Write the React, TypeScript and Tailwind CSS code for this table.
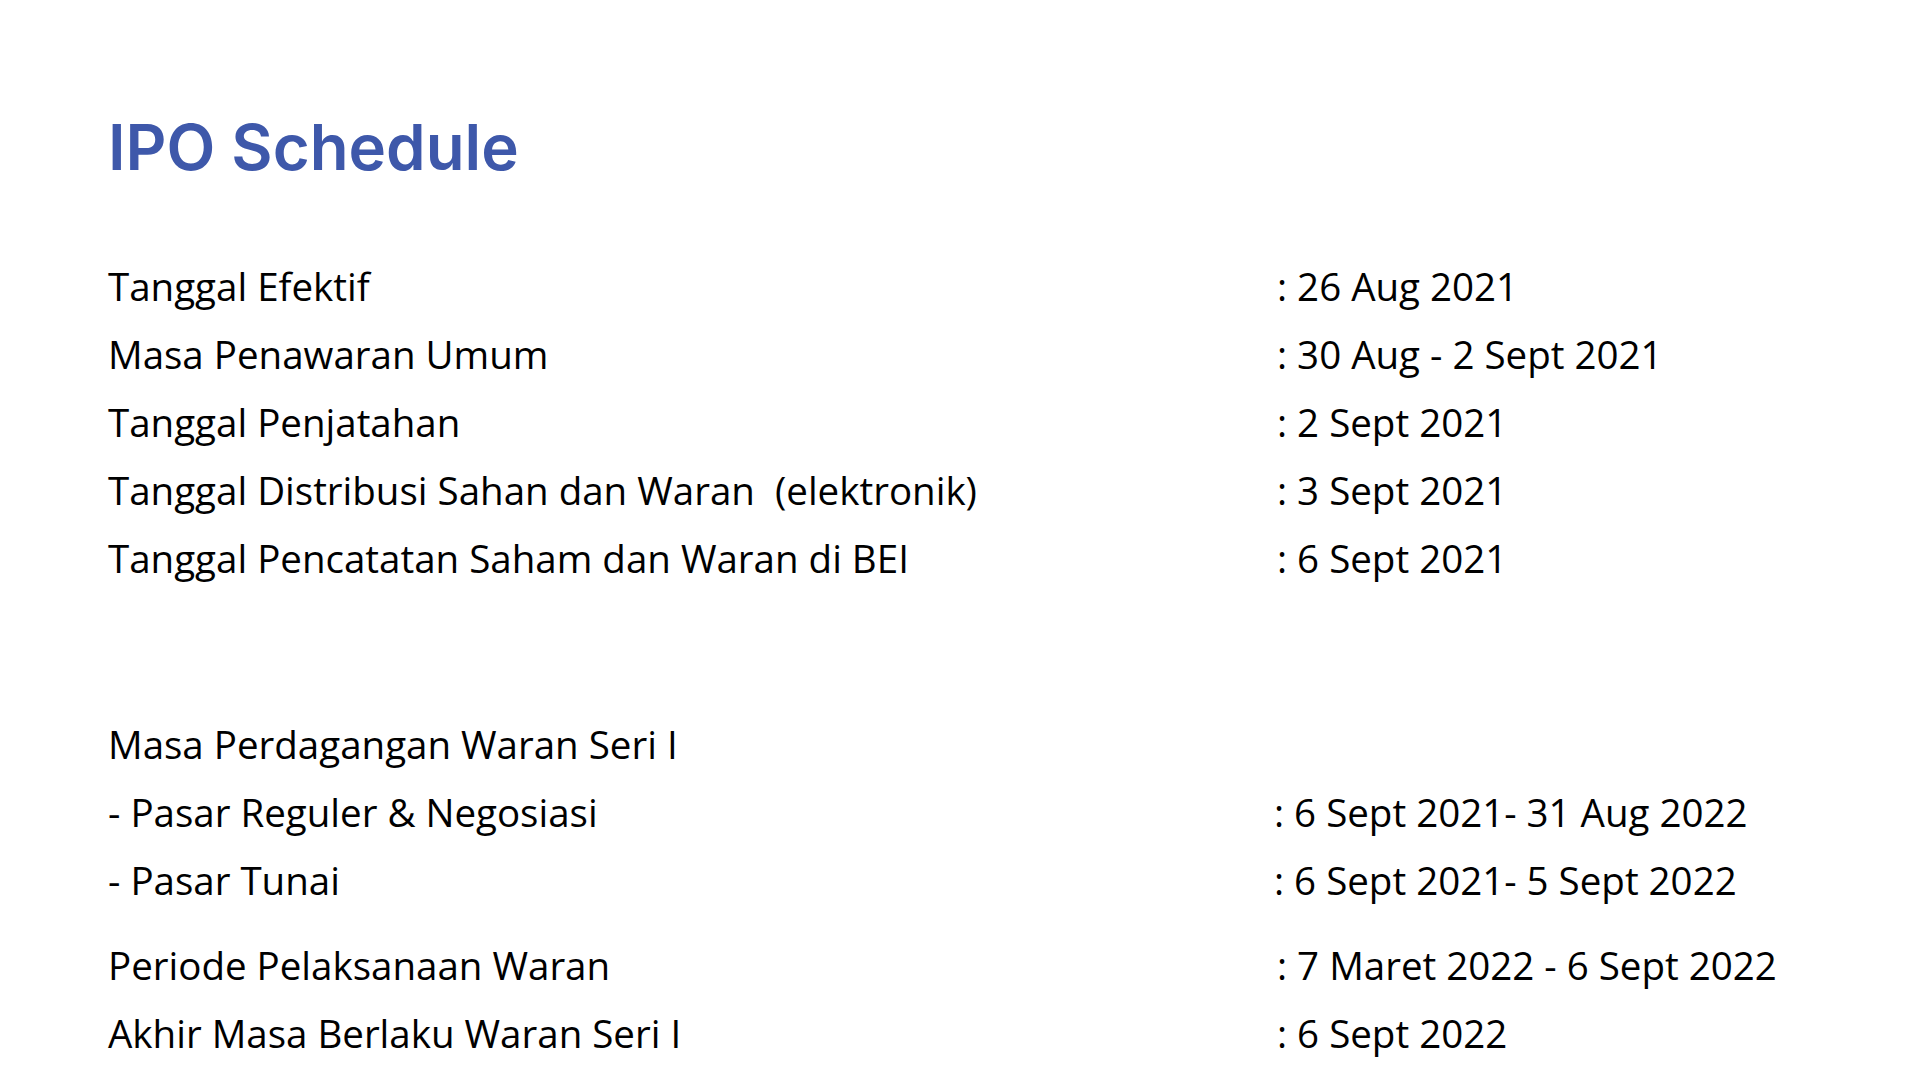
const schedule = [
  { label: 'Tanggal Efektif', value: ': 26 Aug 2021' },
  { label: 'Masa Penawaran Umum', value: ': 30 Aug - 2 Sept 2021' },
  { label: 'Tanggal Penjatahan', value: ': 2 Sept 2021' },
  { label: 'Tanggal Distribusi Sahan dan Waran\u00a0 (elektronik)', value: ': 3 Sept 2021' },
  { label: 'Tanggal Pencatatan Saham dan Waran di BEI', value: ': 6 Sept 2021' },
];

const waran = [
  { label: 'Masa Perdagangan Waran Seri I', value: '' },
  { label: '- Pasar Reguler & Negosiasi', value: ': 6 Sept 2021- 31 Aug 2022', shift: true },
  { label: '- Pasar Tunai', value: ': 6 Sept 2021- 5 Sept 2022', shift: true },
];

const akhir = [
  { label: 'Periode Pelaksanaan Waran', value: ': 7 Maret 2022 - 6 Sept 2022' },
  { label: 'Akhir Masa Berlaku Waran Seri I', value: ': 6 Sept 2022' },
];

type Row = { label: string; value: string; shift?: boolean };

const Rows = ({ rows }: { rows: Row[] }) => (
  <div className="flex flex-col">
    {rows.map(r => (
      <div key={r.label} className="grid grid-cols-[1169px_1fr] h-[68px] items-center">
        <span>{r.label}</span>
        <span className={r.shift ? '-ml-[3px]' : ''}>{r.value}</span>
      </div>
    ))}
  </div>
);

const App = () => {
  return (
    <div className="w-[1920px] h-[1080px] bg-white overflow-hidden pl-[108px] pt-[107px]">
      {/* Heading */}
      <h1 className="font-['Inter',sans-serif] font-semibold text-[63.5px] leading-[80px] text-[#3e58aa]">
        IPO Schedule
      </h1>

      {/* Schedule table */}
      <div className="mt-[66px] font-['Open_Sans',sans-serif] text-[38.5px] text-black">
        <Rows rows={schedule} />
        <div className="mt-[118px]">
          <Rows rows={waran} />
        </div>
        <div className="mt-[17px]">
          <Rows rows={akhir} />
        </div>
      </div>
    </div>
  );
};

export default App;
